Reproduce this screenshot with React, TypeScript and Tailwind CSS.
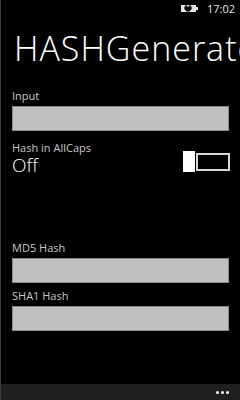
import React from "react";

function Field({ label, className = "" }: { label: string; className?: string }) {
  return (
    <div className={`flex flex-col ${className}`}>
      <span className="text-[11px] leading-[14px] text-[#c8c8c8]">{label}</span>
      <div className="mt-[3px] h-[25px] w-[217px] border border-[#8a8a8a] bg-[#c0c0c0]" />
    </div>
  );
}

export default function App() {
  return (
    <div
      className="relative flex h-[400px] w-[240px] flex-col overflow-hidden border-l border-[#3a3a3a] bg-black text-white"
      style={{ fontFamily: '"Open Sans", "Noto Sans", sans-serif' }}
    >
      {/* Status bar */}
      <div className="flex h-[16px] items-center justify-end gap-[9px] pr-[5px]">
        <svg width="17" height="8" viewBox="0 0 17 8" aria-hidden="true">
          <rect x="0" y="1" width="15" height="7" fill="#e6e6e6" />
          <rect x="15" y="3" width="2" height="3" fill="#e6e6e6" />
          <path d="M5 0v3M9 0v3M4 3h6v2l-2 2h-2l-2-2z" stroke="#000" strokeWidth="1.2" fill="#000" />
        </svg>
        <span className="text-[11px] leading-none text-[#e8e8e8]">17:02</span>
      </div>

      {/* Title */}
      <div className="ml-[13px] mt-[12px] whitespace-nowrap text-[34px] font-light leading-[40px] tracking-[1px]">
        HASHGenerator
      </div>

      <div className="ml-[11px] mt-[21px] flex flex-col">
        <Field label="Input" />

        <span className="mt-[10px] text-[11px] leading-[13px] text-[#c8c8c8]">Hash in AllCaps</span>
        <div className="mt-[1px] flex items-start justify-between pr-[10px]">
          <span className="text-[19px] font-light leading-[20px]">Off</span>
          <div className="-mt-[4px] flex items-center">
            <div className="h-[21px] w-[12px] bg-white" />
            <div className="ml-px h-[18px] w-[34px] border-2 border-[#d8d8d8]" />
          </div>
        </div>

        <Field label="MD5 Hash" className="mt-[66px]" />
        <Field label="SHA1 Hash" className="mt-[6px]" />
      </div>

      {/* App bar */}
      <div className="absolute bottom-0 left-0 right-0 flex h-[16px] items-center justify-end gap-[2px] bg-[#1f1f1f] pr-[11px]">
        <span className="h-[3px] w-[3px] rounded-full bg-white" />
        <span className="h-[3px] w-[3px] rounded-full bg-white" />
        <span className="h-[3px] w-[3px] rounded-full bg-white" />
      </div>
    </div>
  );
}
